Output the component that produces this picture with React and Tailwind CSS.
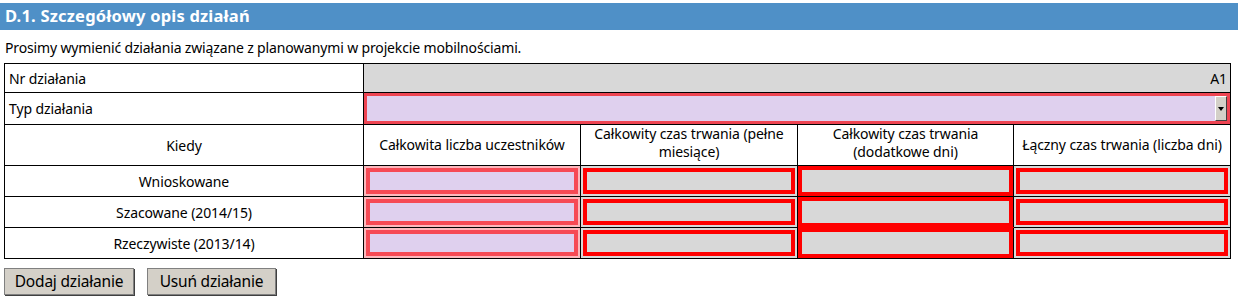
const font = { fontFamily: '"Noto Sans", "Open Sans", sans-serif' };

const rows = ["Wnioskowane", "Szacowane (2014/15)", "Rzeczywiste (2013/14)"];

const Field = ({ kind }) => {
  if (kind === "people") {
    return (
      <div className="h-[30px] bg-[#fbb8bd] p-[2px]">
        <div className="h-full border-[4px] border-[#f64a55] bg-[#dfd0ee]" />
      </div>
    );
  }
  if (kind === "extra") {
    return (
      <div className="h-[30px] bg-[#ff0000] px-[4px] py-[4px]">
        <div className="h-full bg-[#d8d8d8]" />
      </div>
    );
  }
  return (
    <div className="h-[30px] bg-[#d8d8d8] p-[2px]">
      <div className="h-full border-[4px] border-[#ff0000] bg-[#d8d8d8]" />
    </div>
  );
};

export default function App() {
  return (
    <div className="w-[1240px] h-[306px] bg-white text-black" style={font}>
      <div className="pt-[3px] pr-[2px]">
        <div className="h-[27px] bg-[#4f90c7] px-[5px] flex items-center text-white font-bold text-[16.5px] tracking-[0.2px]">
          D.1. Szczegółowy opis działań
        </div>
      </div>
      <p className="px-[5px] pt-[7px] h-[33px] text-[14px] tracking-[-0.15px]">
        Prosimy wymienić działania związane z planowanymi w projekcie mobilnościami.
      </p>
      <div className="pl-[4px]">
        <table className="border-collapse table-fixed w-[1226px] text-[14px] tracking-[-0.1px]">
          <colgroup>
            <col className="w-[359px]" />
            <col className="w-[217px]" />
            <col className="w-[217px]" />
            <col className="w-[216px]" />
            <col className="w-[217px]" />
          </colgroup>
          <tbody>
            <tr className="h-[29px]">
              <td className="border border-black px-[4px] align-middle">Nr działania</td>
              <td colSpan={4} className="border border-black bg-[#d8d8d8] px-[3px] text-right align-middle">
                A1
              </td>
            </tr>
            <tr className="h-[32px]">
              <td className="border border-black px-[4px] align-middle">Typ działania</td>
              <td colSpan={4} className="border border-black p-0">
                <div className="h-[31px] border-[3px] border-[#ee4452] bg-[#dfd0ee] flex justify-end items-stretch">
                  <div className="w-[12px] bg-[#d4d0c8] border border-t-white border-l-white border-r-[#404040] border-b-[#404040] flex items-center justify-center">
                    <svg width="6" height="4" viewBox="0 0 6 4">
                      <path d="M0 0H6L3 4Z" fill="#000" />
                    </svg>
                  </div>
                </div>
              </td>
            </tr>
            <tr className="h-[41px]">
              <td className="border border-black text-center align-middle">Kiedy</td>
              <td className="border border-black text-center align-middle leading-[18px]">
                Całkowita liczba uczestników
              </td>
              <td className="border border-black text-center align-top leading-[18px]">
                Całkowity czas trwania (pełne
                <br />
                miesiące)
              </td>
              <td className="border border-black text-center align-top leading-[18px]">
                Całkowity czas trwania
                <br />
                (dodatkowe dni)
              </td>
              <td className="border border-black text-center align-middle leading-[18px]">
                Łączny czas trwania (liczba dni)
              </td>
            </tr>
            {rows.map((label, i) => (
              <tr key={label}>
                <td className="border border-black text-center align-middle">{label}</td>
                <td className="border border-black p-0">
                  <Field kind="people" />
                </td>
                <td className="border border-black p-0">
                  <Field kind="months" />
                </td>
                <td
                  className={`border border-black p-0 ${i === 1 ? "border-b-[#ff0000]" : ""} ${i === 2 ? "border-t-[#ff0000]" : ""}`}
                >
                  <Field kind="extra" />
                </td>
                <td className="border border-black p-0">
                  <Field kind="days" />
                </td>
              </tr>
            ))}
          </tbody>
        </table>
      </div>
      <div className="flex gap-[13px] pl-[4px] pt-[9px] text-[15.5px] tracking-[-0.2px]">
        <button className="w-[130px] h-[27px] bg-[#d4d0c8] border border-[#808080] shadow-[1px_1px_0_#404040] leading-none">
          Dodaj działanie
        </button>
        <button className="w-[129px] h-[27px] bg-[#d4d0c8] border border-[#808080] shadow-[1px_1px_0_#404040] leading-none">
          Usuń działanie
        </button>
      </div>
    </div>
  );
}
